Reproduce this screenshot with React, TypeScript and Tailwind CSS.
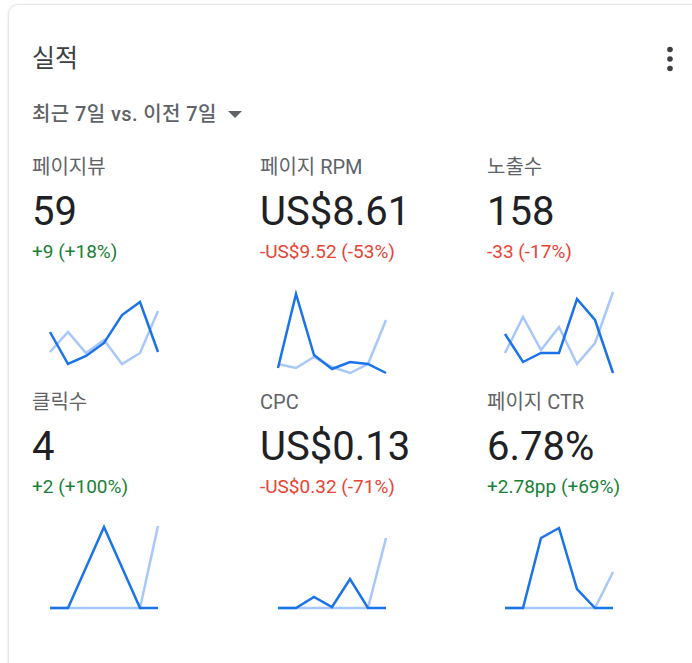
import React from "react";

type Pt = [number, number];

const xs = [2, 20, 38, 56, 74, 92, 110];
const mk = (ys: number[]): Pt[] => ys.map((y, i) => [xs[i], y]);

type Metric = {
  label: string;
  value: string;
  change: string;
  up: boolean;
  dark: Pt[];
  light: Pt[];
};

const metrics: Metric[] = [
  {
    label: "페이지뷰",
    value: "59",
    change: "+9 (+18%)",
    up: true,
    dark: mk([43, 75, 67, 54, 26, 13, 63]),
    light: mk([63, 43, 64, 51, 75, 64, 22]),
  },
  {
    label: "페이지 RPM",
    value: "US$8.61",
    change: "-US$9.52 (-53%)",
    up: false,
    dark: mk([79, 5, 66, 80, 73, 75, 84]),
    light: mk([75, 79, 68, 78, 84, 75, 31]),
  },
  {
    label: "노출수",
    value: "158",
    change: "-33 (-17%)",
    up: false,
    dark: mk([45, 73, 64, 64, 10, 31, 84]),
    light: mk([64, 28, 61, 38, 75, 54, 3]),
  },
  {
    label: "클릭수",
    value: "4",
    change: "+2 (+100%)",
    up: true,
    dark: mk([84, 84, 43.5, 3, 43.5, 84, 84]),
    light: mk([84, 84, 84, 84, 84, 84, 2]),
  },
  {
    label: "CPC",
    value: "US$0.13",
    change: "-US$0.32 (-71%)",
    up: false,
    dark: mk([84, 84, 73, 83, 55, 84, 84]),
    light: mk([84, 84, 84, 84, 84, 84, 14]),
  },
  {
    label: "페이지 CTR",
    value: "6.78%",
    change: "+2.78pp (+69%)",
    up: true,
    dark: mk([84, 84, 14, 4, 65, 84, 84]),
    light: mk([84, 84, 84, 84, 84, 84, 48]),
  },
];

const toPoints = (p: Pt[]) => p.map(([x, y]) => `${x},${y}`).join(" ");

function Spark({ dark, light }: { dark: Pt[]; light: Pt[] }) {
  return (
    <svg width="112" height="88" viewBox="0 0 112 88" className="block ml-[16px] mt-[25px]">
      <polyline points={toPoints(light)} fill="none" stroke="#a8c7fa" strokeWidth="2.5" />
      <polyline points={toPoints(dark)} fill="none" stroke="#1a73e8" strokeWidth="2.5" />
    </svg>
  );
}

export default function App() {
  return (
    <div
      className="w-[692px] h-[663px] overflow-hidden bg-white"
      style={{ fontFamily: 'Roboto, "Noto Sans CJK KR", sans-serif' }}
    >
      <div className="ml-[8px] mt-[4px] w-[740px] h-[720px] rounded-[10px] border border-[#e6e6e6] bg-white shadow-[0_1px_3px_rgba(0,0,0,0.12)] pl-[23px] pt-[38px]">
        <div className="flex items-center justify-between w-[650px] h-[32px]">
          <div className="text-[25px] leading-[32px] text-[#3c4043]">실적</div>
          <div className="w-[24px] flex justify-center">
            <svg width="8" height="26" viewBox="0 0 8 26">
              <circle cx="4" cy="3.5" r="2.8" fill="#3c4043" />
              <circle cx="4" cy="13" r="2.8" fill="#3c4043" />
              <circle cx="4" cy="22.5" r="2.8" fill="#3c4043" />
            </svg>
          </div>
        </div>
        <div className="mt-[25px] flex items-center h-[28px]">
          <span className="text-[20px] leading-[28px] font-medium tracking-[0.4px] text-[#5f6368]">최근 7일 vs. 이전 7일</span>
          <svg width="14" height="7" viewBox="0 0 14 7" className="ml-[11px]">
            <polygon points="0,0 14,0 7,7" fill="#5f6368" />
          </svg>
        </div>
        <div className="mt-[27px] grid grid-cols-[228px_227px_227px] gap-y-[13px]">
          {metrics.map((m) => (
            <div key={m.label} className="flex flex-col">
              <div className="text-[20px] leading-[24px] text-[#5f6368] whitespace-nowrap">{m.label}</div>
              <div className="mt-[9px] text-[40px] leading-[48px] text-[#202124] whitespace-nowrap">{m.value}</div>
              <div
                className={`mt-[4px] text-[19px] leading-[24px] whitespace-nowrap ${
                  m.up ? "text-[#188038]" : "text-[#ea4335]"
                }`}
              >
                {m.change}
              </div>
              <Spark dark={m.dark} light={m.light} />
            </div>
          ))}
        </div>
      </div>
    </div>
  );
}
